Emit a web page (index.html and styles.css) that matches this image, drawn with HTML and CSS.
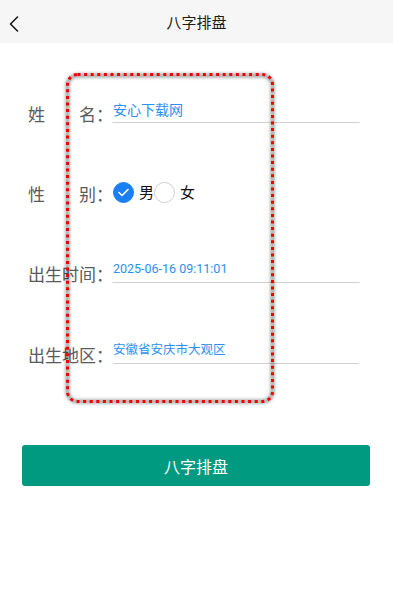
FILE: index.html
```html
<!DOCTYPE html>
<html lang="zh-CN">
<head>
<meta charset="utf-8">
<meta name="viewport" content="width=device-width, initial-scale=1">
<title>八字排盘</title>
<link rel="stylesheet" href="styles.css">
</head>
<body>
<header class="topbar">
  <svg class="back" width="10" height="16" viewBox="0 0 10 16"><path d="M8.5 1 L1.5 8 L8.5 15" fill="none" stroke="#111" stroke-width="1.5" stroke-linecap="round" stroke-linejoin="round"/></svg>
  <h1 class="title">八字排盘</h1>
</header>
<main class="form">
  <div class="row">
    <div class="label split"><span>姓</span><span>名：</span></div>
    <div class="field name">安心下载网</div>
  </div>
  <div class="row">
    <div class="label split"><span>性</span><span>别：</span></div>
    <div class="radios">
      <span class="radio checked"><svg width="11" height="9" viewBox="0 0 11 9"><path d="M1 4.5 L4 7.5 L10 1.5" fill="none" stroke="#fff" stroke-width="1.6" stroke-linecap="round" stroke-linejoin="round"/></svg></span>
      <span class="opt">男</span>
      <span class="radio"></span>
      <span class="opt">女</span>
    </div>
  </div>
  <div class="row">
    <div class="label">出生时间：</div>
    <div class="field small">2025-06-16 09:11:01</div>
  </div>
  <div class="row last">
    <div class="label">出生地区：</div>
    <div class="field small">安徽省安庆市大观区</div>
  </div>
  <button class="submit">八字排盘</button>
</main>
<div class="annot">
  <svg width="208" height="330" viewBox="0 0 208 330">
    <defs><filter id="b" x="-10%" y="-10%" width="120%" height="120%"><feGaussianBlur stdDeviation="1.8"/></filter></defs>
    <rect x="1.5" y="2.5" width="205" height="326" rx="10" fill="none" stroke="rgba(0,0,0,0.32)" stroke-width="4.5" filter="url(#b)"/>
    <rect x="1.5" y="1.5" width="205" height="327" rx="10" fill="none" stroke="#f20000" stroke-width="3" stroke-dasharray="3 3.6"/>
  </svg>
</div>
</body>
</html>
```
FILE: styles.css
```css
html, body {
  margin: 0;
  padding: 0;
  background: #fff;
  font-family: Roboto, "Noto Sans CJK SC", sans-serif;
}
.topbar {
  position: relative;
  height: 43px;
  background: #f6f6f6;
  display: flex;
  align-items: center;
  justify-content: center;
}
.back {
  position: absolute;
  left: 9px;
  top: 16px;
}
.title {
  margin: 0;
  font-size: 15px;
  font-weight: normal;
  color: #1a1a1a;
  line-height: 20px;
  padding-top: 2px;
}
.form {
  padding: 56px 23px 0 28px;
  display: flex;
  flex-direction: column;
}
.row {
  display: flex;
  align-items: flex-end;
  height: 26px;
  margin-bottom: 54px;
}
.row.last {
  margin-top: 1px;
}
.label {
  width: 85px;
  flex: none;
  font-size: 17px;
  line-height: 20px;
  color: #5a5a5a;
}
.split {
  display: flex;
  justify-content: space-between;
}
.field {
  flex: 1;
  margin-right: 11px;
  margin-bottom: 2px;
  height: 23px;
  border-bottom: 1px solid #d0d0d0;
  color: #2b8ff5;
  font-size: 14px;
  line-height: 22px;
  white-space: nowrap;
}
.field.small {
  font-size: 12.5px;
  line-height: 19px;
}
.radios {
  display: flex;
  align-items: center;
  height: 21px;
  margin-bottom: 2px;
}
.radio {
  width: 21px;
  height: 21px;
  box-sizing: border-box;
  border-radius: 50%;
  border: 1px solid #cfcfcf;
  display: flex;
  align-items: center;
  justify-content: center;
}
.radio.checked {
  background: #1a7ef4;
  border-color: #1a7ef4;
}
.opt {
  margin-left: 5px;
  font-size: 15px;
  line-height: 20px;
  color: #111;
}
.submit {
  margin: 25px 0 0 -6px;
  height: 41px;
  border: none;
  border-radius: 3px;
  background: #009a80;
  color: #fff;
  font-family: Roboto, "Noto Sans CJK SC", sans-serif;
  font-size: 16px;
}
.annot {
  position: absolute;
  left: 66px;
  top: 73px;
  width: 208px;
  height: 330px;
}
.annot svg {
  display: block;
  overflow: visible;
}
```
